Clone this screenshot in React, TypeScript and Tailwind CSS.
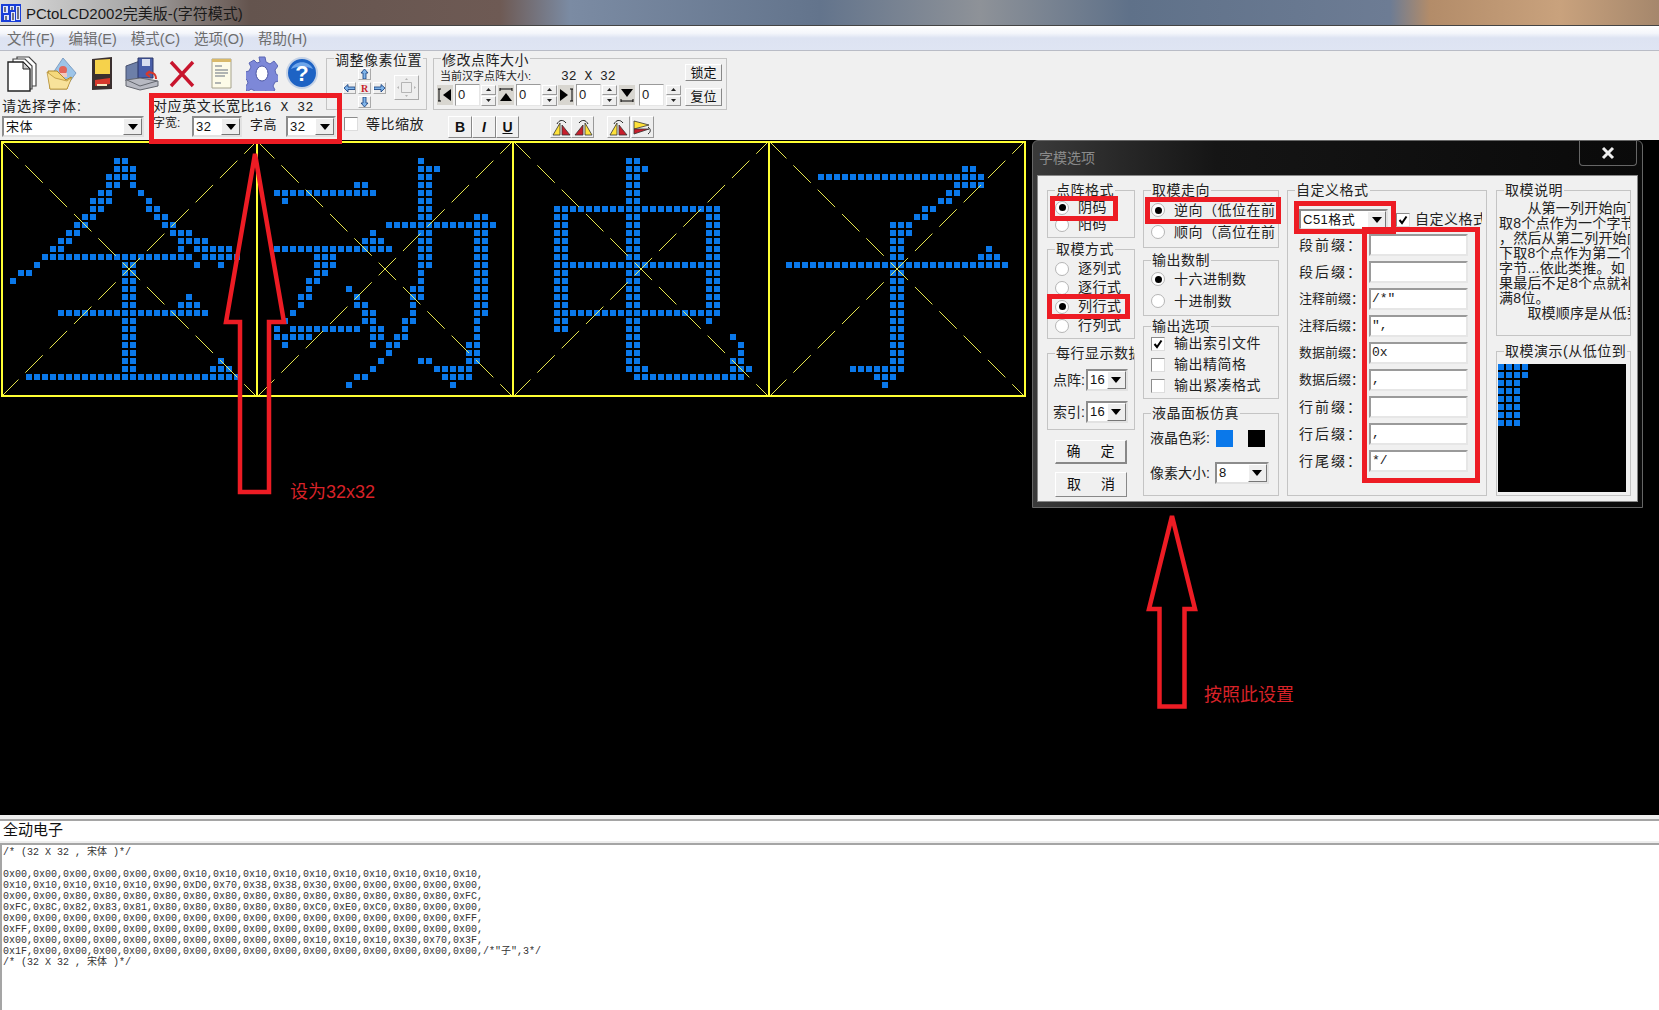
import React from 'react';

// dot rows for each glyph: row -> "col col-col ..."
const col1516 = '15-16';
const glyphs: Record<number, string>[] = [
  {
    2: '14-15', 3: '14-16', 4: '13-16', 5: '13-14 16', 6: '12-13 17', 7: '11-13 18', 8: '11-12 18-19', 9: '10-11 19-20',
    10: '9-10 20-21', 11: '8-9 21-23', 12: '7-8 22-25', 13: '6-7 22 24-28', 14: '5-23 25-29', 15: '4 15-16 24 27',
    16: '2-3 15-16', 17: '1 15-16', 18: col1516, 19: '15-16 23', 20: '15-16 22-24', 21: '7-25', 22: col1516, 23: col1516,
    24: col1516, 25: col1516, 26: col1516, 27: '15-16 27', 28: '15-16 26-28', 29: '3-29',
  },
  {
    2: '20', 3: '20-22', 4: '20-21', 5: '12-13 20-21', 6: '2-14 20-21', 7: '3 20-21', 8: '20-21', 9: '20-21 27-28',
    10: '16-29', 11: '14 20-21 27-28', 12: '13-15 20-21 27-28', 13: '2-16 20-21 27-28', 14: '7-9 20-21 27-28',
    15: '7-9 20-21 27-28', 16: '7-8 20 27-28', 17: '6-7 20 27-28', 18: '6 11 19-20 27-28', 19: '5-6 12 19-20 27-28',
    20: '5 12-13 19 27-28', 21: '4 13-14 19 27-28', 22: '3 13-14 18-19 27', 23: '2 4-12 14-15 18 27', 24: '2-6 14-15 17-18 27',
    25: '3 14 16-17 26-27', 26: '16 26-27', 27: '15 20-21 26-27', 28: '14 22-26', 29: '12-13 23-26', 30: '11 24',
  },
  {
    2: '14-15', 3: '14-16', 4: '14-15', 5: '14-15', 6: '14-15', 7: '14-15', 8: '5-25', 9: '5-6 14-15 24-25', 10: '5-6 14-15 24-25',
    11: '5-6 14-15 24-25', 12: '5-6 14-15 24-25', 13: '5-6 14-15 24-25', 14: '5-6 14-15 24-25', 15: '5-25', 16: '5-6 14-15 24-25',
    17: '5-6 14-15 24-25', 18: '5-6 14-15 24-25', 19: '5-6 14-15 24-25', 20: '5-6 14-15 24-25', 21: '5-25', 22: '5-6 14-15 24',
    23: '5-6 14-15', 24: '14-15 27', 25: '14-15 28', 26: '14-15 28', 27: '14-15 27-28', 28: '14-16 27-29', 29: '15-28',
  },
  {
    3: '24-25', 4: '6-26', 5: '23-26', 6: '22-23', 7: '21-22', 8: '19-20', 9: '18-19', 10: '15-17', 11: '15-17', 12: col1516,
    13: '15-16 27', 14: '15-16 26-28', 15: '2-29', 16: col1516, 17: col1516, 18: col1516, 19: col1516, 20: col1516, 21: col1516,
    22: col1516, 23: col1516, 24: col1516, 25: col1516, 26: col1516, 27: col1516, 28: '10-16', 29: '13-15', 30: '14',
  },
];

const dots = (glyph: Record<number, string>) =>
  Object.entries(glyph).flatMap(([row, spec]) =>
    spec.split(' ').flatMap(part => {
      const [a, b] = part.split('-').map(Number);
      const out: [number, number][] = [];
      for (let c = a; c <= (b ?? a); c++) out.push([c, Number(row)]);
      return out;
    }),
  );

const hexLines = [
  '0x00, 0x00, 0x00, 0x00, 0x00, 0x00, 0x10, 0x10, 0x10, 0x10, 0x10, 0x10, 0x10, 0x10, 0x10, 0x10,',
  '0x10, 0x10, 0x10, 0x10, 0x10, 0x90, 0xD0, 0x70, 0x38, 0x38, 0x30, 0x00, 0x00, 0x00, 0x00, 0x00,',
  '0x00, 0x00, 0x80, 0x80, 0x80, 0x80, 0x80, 0x80, 0x80, 0x80, 0x80, 0x80, 0x80, 0x80, 0x80, 0xFC,',
  '0xFC, 0x8C, 0x82, 0x83, 0x81, 0x80, 0x80, 0x80, 0x80, 0x80, 0xC0, 0xE0, 0xC0, 0x80, 0x00, 0x00,',
  '0x00, 0x00, 0x00, 0x00, 0x00, 0x00, 0x00, 0x00, 0x00, 0x00, 0x00, 0x00, 0x00, 0x00, 0x00, 0xFF,',
  '0xFF, 0x00, 0x00, 0x00, 0x00, 0x00, 0x00, 0x00, 0x00, 0x00, 0x00, 0x00, 0x00, 0x00, 0x00, 0x00,',
  '0x00, 0x00, 0x00, 0x00, 0x00, 0x00, 0x00, 0x00, 0x00, 0x00, 0x10, 0x10, 0x10, 0x30, 0x70, 0x3F,',
  '0x1F, 0x00, 0x00, 0x00, 0x00, 0x00, 0x00, 0x00, 0x00, 0x00, 0x00, 0x00, 0x00, 0x00, 0x00, 0x00, /*"子",3*/',
];

const Triangle = () => (
  <svg width="10" height="6" viewBox="0 0 10 6"><path d="M0 0h10L5 6z" fill="#000" /></svg>
);

const Combo: React.FC<{ value: string; className: string }> = ({ value, className }) => (
  <div className={`flex items-stretch bg-white border-2 border-t-[#8c8c8c] border-l-[#8c8c8c] border-r-[#e2e2e2] border-b-[#e2e2e2] ${className}`}>
    <span className="flex-1 overflow-hidden whitespace-nowrap pl-[2px] text-[13px] leading-[17px] tracking-[0.5px] text-[#111]">{value}</span>
    <span className="flex w-[19px] items-center justify-center border border-t-white border-l-white border-r-[#777] border-b-[#777] bg-[#eeeeee]">
      <Triangle />
    </span>
  </div>
);

const Radio: React.FC<{ on?: boolean }> = ({ on }) => (
  <span className="flex h-[14px] w-[14px] shrink-0 items-center justify-center rounded-full border border-[#b5b5b5] bg-white">
    {on && <span className="h-[7px] w-[7px] rounded-full bg-black" />}
  </span>
);

const Check: React.FC<{ on?: boolean }> = ({ on }) => (
  <span className="flex h-[14px] w-[14px] shrink-0 items-center justify-center border border-t-[#8c8c8c] border-l-[#8c8c8c] border-r-[#dddddd] border-b-[#dddddd] bg-white">
    {on && (
      <svg width="10" height="10" viewBox="0 0 10 10"><path d="M1.5 5l2.5 3 4.5-6.5" fill="none" stroke="#000" strokeWidth="2" /></svg>
    )}
  </span>
);

const Group: React.FC<{ title: string; className: string; low?: boolean; children?: React.ReactNode }> = ({ title, className, low, children }) => (
  <div className={`relative shrink-0 border border-[#c4c4c4] ${className}`}>
    <span className={`absolute left-[7px] max-w-[calc(100%-7px)] overflow-hidden whitespace-nowrap bg-[#f0f0f0] px-px text-[14px] leading-[16px] tracking-[0.5px] text-[#222] ${low ? 'top-[-7px]' : 'top-[-9px]'}`}>
      {title}
    </span>
    {children}
  </div>
);

const Row: React.FC<{ label: string; on?: boolean; className?: string }> = ({ label, on, className }) => (
  <div className={`flex items-center gap-[9px] whitespace-nowrap text-[14px] leading-[19px] tracking-[0.5px] text-[#222] ${className ?? ''}`}>
    <Radio on={on} />
    {label}
  </div>
);

const CheckRow: React.FC<{ label: string; on?: boolean }> = ({ label, on }) => (
  <div className="flex h-[21px] items-center gap-[9px] overflow-hidden whitespace-nowrap text-[14px] tracking-[0.5px] text-[#222]">
    <Check on={on} />
    {label}
  </div>
);

const Raised: React.FC<{ className: string; children?: React.ReactNode }> = ({ className, children }) => (
  <div className={`flex items-center justify-center border border-t-white border-l-white border-r-[#888] border-b-[#888] bg-[#f0f0f0] text-[#111] ${className}`}>
    {children}
  </div>
);

const Spin: React.FC<{ icon: React.ReactNode; inputMl: string; spinMl: string; ml: string }> = ({ icon, inputMl, spinMl, ml }) => (
  <div className={`flex items-center ${ml}`}>
    <span className="flex h-[20px] w-[16px] items-center justify-center bg-[#d8d6d0]">{icon}</span>
    <span className={`h-[22px] w-[25px] border border-t-[#9a9a9a] border-l-[#9a9a9a] border-r-[#e6e6e6] border-b-[#e6e6e6] bg-white pl-[2px] text-[13px] leading-[20px] text-[#222] ${inputMl}`}>0</span>
    <span className={`flex w-[15px] flex-col gap-px ${spinMl}`}>
      <span className="flex h-[10px] items-center justify-center border border-t-white border-l-white border-r-[#999] border-b-[#999] bg-[#eeeeee] text-[0px]">
        <svg width="5" height="3" viewBox="0 0 5 3"><path d="M0 3h5L2.5 0z" fill="#222" /></svg>
      </span>
      <span className="flex h-[10px] items-center justify-center border border-t-white border-l-white border-r-[#999] border-b-[#999] bg-[#eeeeee] text-[0px]">
        <svg width="5" height="3" viewBox="0 0 5 3"><path d="M0 0h5L2.5 3z" fill="#222" /></svg>
      </span>
    </span>
  </div>
);

const Arrow: React.FC<{ d: string }> = ({ d }) => (
  <span className="flex h-[12px] w-[13px] items-center justify-center border border-t-white border-l-white border-r-[#aaa] border-b-[#aaa] bg-[#eeeeee]">
    <svg width="11" height="10" viewBox="0 0 11 10"><path d={d} fill="#7fb4ea" stroke="#123a78" strokeWidth="0.8" /></svg>
  </span>
);

const RotateIcon: React.FC<{ flip?: boolean; variant?: boolean; className: string }> = ({ flip, variant, className }) => (
  <span className={`flex h-[22px] w-[23px] items-center justify-center border border-t-white border-l-white border-r-[#999] border-b-[#999] bg-[#eeeeee] ${className}`}>
    <svg width="20" height="18" viewBox="0 0 20 18" className={flip ? '-scale-x-100' : ''}>
      {variant ? (
        <>
          <path d="M1 3l15 4-15 4z" fill="#ffe23a" stroke="#333" strokeWidth="0.8" />
          <path d="M1 11l15 0-15 5z" fill="#c81e2b" stroke="#333" strokeWidth="0.8" />
          <path d="M15 9c3 2 3 5 0 7" fill="none" stroke="#222" />
        </>
      ) : (
        <>
          <path d="M1 17L8 5v12z" fill="#ffe23a" stroke="#333" strokeWidth="0.8" />
          <path d="M10 7l8 10h-8z" fill="#c81e2b" stroke="#333" strokeWidth="0.8" />
          <path d="M5 6c2-4 6-5 9-1" fill="none" stroke="#222" />
        </>
      )}
    </svg>
  </span>
);

const ToolbarIcons = () => (
  <div className="flex h-[45px] items-start pt-[5px]">
    <svg width="30" height="36" viewBox="0 0 30 36" className="ml-[7px]">
      <path d="M10 1h12l7 7v22H10z" fill="#fff" stroke="#444" strokeWidth="1.2" />
      <path d="M6 3h12l7 7v23H6z" fill="#fff" stroke="#444" strokeWidth="1.2" />
      <path d="M1 6h15l7 7v22H1z" fill="#fff" stroke="#222" strokeWidth="1.4" />
      <path d="M16 6v7h7z" fill="#ccc" stroke="#222" />
    </svg>
    <svg width="32" height="34" viewBox="0 0 32 34" className="ml-[9px]">
      <path d="M5 20L17 2l13 15-10 14z" fill="#9cc4e8" stroke="#7e9fc4" />
      <circle cx="17" cy="14" r="4" fill="#e2665a" />
      <path d="M13 17h8v4h-8z" fill="#f3c9bd" />
      <path d="M2 15h9l9 9 5-3-4 12H4z" fill="#f5d97c" stroke="#b08a2e" />
      <path d="M4 33L1 16l8 6 12 3 5-4-5 12z" fill="#f8e29a" stroke="#b08a2e" strokeWidth="0.7" />
    </svg>
    <svg width="24" height="35" viewBox="0 0 24 35" className="ml-[12px]">
      <path d="M2 3l20-2v32l-20 1z" fill="#3a2f2f" />
      <path d="M5 4l15-1v15H5z" fill="#f6d24b" />
      <path d="M5 24l15-2v6l-15 2z" fill="#d8382b" />
      <path d="M7 28h10v2H7z" fill="#f6e7c0" />
    </svg>
    <svg width="34" height="35" viewBox="0 0 34 35" className="ml-[11px]">
      <path d="M1 10l14-5v18l-14 2z" fill="#6d7fa8" stroke="#46506e" />
      <path d="M13 2h15v20H13z" fill="#4a5fa8" stroke="#2b3768" />
      <path d="M17 3h8v7h-8z" fill="#d9deef" />
      <path d="M1 24l14-2 18 3v5l-18 4-14-4z" fill="#b7b9c2" stroke="#63666e" />
      <path d="M2 24l13 6 17-5" fill="none" stroke="#63666e" />
      <path d="M21 18c5-3 10-1 10 5M21 18l4-3M21 18l4 3" fill="none" stroke="#d8382b" strokeWidth="2" />
    </svg>
    <svg width="26" height="28" viewBox="0 0 26 28" className="ml-[10px] mt-[4px]">
      <path d="M2 2l22 24M24 2L2 26" stroke="#c8152d" strokeWidth="3.4" />
    </svg>
    <svg width="21" height="31" viewBox="0 0 21 31" className="ml-[16px] mt-[2px]">
      <path d="M1 1h19v29H1z" fill="#fdfbe8" stroke="#a5a28c" />
      <path d="M1 1h19v3H1z" fill="#d9b96a" />
      <path d="M4 8h7M4 12h13M4 15h13M4 18h10M4 25h6" stroke="#66707e" strokeWidth="1.2" />
    </svg>
    <svg width="32" height="35" viewBox="0 0 32 35" className="ml-[14px]">
      <path
        d="M13 1h6l1 5 4 2 4-3 4 5-3 4 1 4 3 2v5l-4 1-2 4 2 4-5 4-4-3-3 1-2 4h-5l-1-5-4-2-4 3-2-5 3-4-1-3-2-2v-6l4-1 2-4-2-4 5-3 3 3 3-1z"
        fill="#7d88d8"
        stroke="#5b66b4"
      />
      <ellipse cx="16" cy="17.5" rx="6" ry="7.5" fill="#fff" stroke="#4e58a4" />
    </svg>
    <svg width="32" height="34" viewBox="0 0 32 34" className="ml-[8px]">
      <circle cx="16" cy="17" r="15" fill="#1e63c4" stroke="#c6d3e6" strokeWidth="2" />
      <path d="M5 13c4-9 18-9 22 0-7-3-15-3-22 0z" fill="#6fa6ea" />
      <text x="16" y="25" textAnchor="middle" fontSize="22" fontWeight="700" fill="#fff" fontFamily="Liberation Sans">?</text>
    </svg>
  </div>
);

const CharGrid = () => (
  <svg width="1028" height="258" viewBox="0 0 1028 258" className="block">
    {glyphs.map((g, i) =>
      dots(g).map(([c, r]) => <rect key={`${i}-${c}-${r}`} x={2 + 256 * i + 8 * c} y={2 + 8 * r} width="6" height="6" fill="#0a78ea" />),
    )}
    {[0, 1, 2, 3].map(i => (
      <g key={i} stroke="#ffff55" strokeWidth="0.9" strokeDasharray="24.7 9.7">
        <line x1={1 + 256 * i} y1="1" x2={257 + 256 * i} y2="257" />
        <line x1={1 + 256 * i} y1="257" x2={257 + 256 * i} y2="1" />
      </g>
    ))}
    {[1, 256, 512, 768, 1024].map(x => (
      <rect key={x} x={x} y="1" width="2" height="256" fill="#ffff33" />
    ))}
    <rect x="1" y="1" width="1025" height="2" fill="#ffff33" />
    <rect x="1" y="255" width="1025" height="2" fill="#ffff33" />
  </svg>
);

const labelRows = [
  ['段前缀：', ''],
  ['段后缀：', ''],
  ['注释前缀：', '/*"'],
  ['注释后缀：', '",'],
  ['数据前缀：', '0x'],
  ['数据后缀：', ','],
  ['行前缀：', ''],
  ['行后缀：', ','],
  ['行尾缀：', '*/'],
];

const noteLines = [
  '\u3000\u3000从第一列开始向下',
  '取8个点作为一个字节',
  '，然后从第二列开始向',
  '下取8个点作为第二个',
  '字节...依此类推。如',
  '果最后不足8个点就补',
  '满8位。',
  '\u3000\u3000取模顺序是从低到',
];

const OptionsDialog = () => (
  <div className="absolute left-[1032px] top-[140px] h-[368px] w-[611px] rounded-t-[6px] border border-[#666] bg-[linear-gradient(90deg,#3a3a3a_0%,#151515_30%,#0a0a0a_100%)] px-[4px]">
    <div className="relative flex h-[34px] items-center pl-[2px] text-[14px] text-[#8a8a8a]">
      字模选项
      <span className="absolute right-[1px] top-0 flex h-[25px] w-[58px] items-center justify-center rounded-b-[4px] border border-t-0 border-[#666]">
        <svg width="14" height="14" viewBox="0 0 14 14"><path d="M2 2l10 10M12 2L2 12" stroke="#eee" strokeWidth="3" /></svg>
      </span>
    </div>
    <div className="flex h-[327px] border border-[#888] bg-[#f0f0f0] pl-[9px] pt-[14px]">
      <div className="flex w-[88px] shrink-0 flex-col">
        <Group title="点阵格式" className="h-[48px] pl-[7px] pt-[7px]">
          <Row label="阴码" on />
          <Row label="阳码" className="mt-[-2px]" />
        </Group>
        <Group title="取模方式" className="mt-[11px] h-[90px] pl-[7px] pt-[9px]">
          <Row label="逐列式" />
          <Row label="逐行式" />
          <Row label="列行式" on />
          <Row label="行列式" />
        </Group>
        <Group title="每行显示数据" className="mt-[14px] h-[77px] pt-[15px]">
          <div className="flex items-center gap-px pl-[5px] text-[14px] text-[#222]">
            点阵:<Combo value="16" className="h-[22px] w-[42px]" />
          </div>
          <div className="mt-[10px] flex items-center gap-px pl-[5px] text-[14px] text-[#222]">
            索引:<Combo value="16" className="h-[22px] w-[42px]" />
          </div>
        </Group>
        <Raised className="ml-[8px] mt-[10px] h-[24px] w-[72px] gap-[20px] border-b-2 border-r-2 text-[14px]"><span>确</span><span>定</span></Raised>
        <Raised className="ml-[8px] mt-[8px] h-[25px] w-[72px] gap-[20px] text-[14px]"><span>取</span><span>消</span></Raised>
      </div>

      <div className="ml-[8px] flex w-[136px] shrink-0 flex-col">
        <Group title="取模走向" className="h-[58px] pl-[7px] pt-[8px]">
          <Row label="逆向（低位在前" on className="h-[22px] w-[127px] overflow-hidden" />
          <Row label="顺向（高位在前" className="h-[22px] w-[127px] overflow-hidden" />
        </Group>
        <Group title="输出数制" className="mt-[12px] h-[56px] pl-[7px] pt-[7px]">
          <Row label="十六进制数" on className="h-[22px]" />
          <Row label="十进制数" className="h-[22px]" />
        </Group>
        <Group title="输出选项" className="mt-[10px] h-[73px] pl-[7px] pt-[6px]">
          <div className="w-[126px]">
            <CheckRow label="输出索引文件" on />
            <CheckRow label="输出精简格" />
            <CheckRow label="输出紧凑格式" />
          </div>
        </Group>
        <Group title="液晶面板仿真" className="mt-[14px] h-[83px] pl-[6px] pt-[14px] text-[14px] text-[#222]">
          <div className="flex items-center whitespace-nowrap">
            液晶色彩:
            <span className="ml-[6px] h-[17px] w-[17px] bg-[#0a78ea]" />
            <span className="ml-[15px] h-[17px] w-[17px] bg-black" />
          </div>
          <div className="mt-[13px] flex items-center whitespace-nowrap">
            像素大小:
            <Combo value="8" className="ml-[5px] h-[22px] w-[54px]" />
          </div>
        </Group>
      </div>

      <Group title="自定义格式" className="ml-[8px] h-[306px] w-[200px] pl-[11px] pt-[18px]">
        <div className="flex items-center">
          <Combo value="C51格式" className="h-[21px] w-[89px]" />
          <span className="ml-[8px]"><Check on /></span>
          <span className="ml-[5px] w-[67px] overflow-hidden whitespace-nowrap text-[14px] tracking-[0.5px] text-[#222]">自定义格式</span>
        </div>
        <div className="mt-[4px] flex flex-col gap-[5px]">
          {labelRows.map(([label, value]) => (
            <div key={label} className="flex items-center">
              <span className={`w-[70px] shrink-0 whitespace-nowrap text-[#222] ${label.length === 4 ? 'text-[14px] tracking-[2px]' : 'text-[13px]'}`}>{label}</span>
              <span className="h-[22px] w-[99px] border-2 border-t-[#9a9a9a] border-l-[#9a9a9a] border-r-[#e6e6e6] border-b-[#e6e6e6] bg-white pl-[1px] font-['Liberation_Mono',monospace] text-[13px] leading-[18px] text-[#222]">{value}</span>
            </div>
          ))}
        </div>
      </Group>

      <div className="ml-[9px] flex w-[135px] shrink-0 flex-col">
        <Group title="取模说明" className="h-[146px] pl-[2px] pt-[10px]">
          <div className="w-[131px] overflow-hidden text-[14px] leading-[15px] tracking-[0.2px] text-[#222]">
            {noteLines.map(line => (
              <div key={line} className="whitespace-nowrap">{line}</div>
            ))}
          </div>
        </Group>
        <Group title="取模演示(从低位到" className="mt-[15px] h-[145px] pl-[1px] pt-[12px]">
          <div className="flex h-[128px] w-[128px] flex-col gap-[2px] bg-black">
            {[4, 4, 3, 3, 3, 3, 3, 3].map((n, y) => (
              <div key={y} className="flex h-[6px] gap-[2px]">
                {Array.from({ length: n }).map((_, x) => (
                  <span key={x} className="h-[6px] w-[6px] bg-[#0a78ea]" />
                ))}
              </div>
            ))}
          </div>
        </Group>
      </div>
    </div>
  </div>
);

const App: React.FC = () => (
  <div className="relative flex h-[1010px] w-[1659px] flex-col overflow-hidden bg-[#f0f0f0] font-['Liberation_Sans','Noto_Sans_CJK_SC',sans-serif]">
    {/* title bar */}
    <div className="flex h-[25px] shrink-0 items-center bg-[linear-gradient(90deg,#dddddd_0px,#a8a8a8_130px,#64544e_250px,#6e5a54_500px,#7b8ba3_570px,#63748c_820px,#8e9298_980px,#5f7189_1130px,#6d7c94_1390px,#b38c69_1430px,#c9a27d_1560px,#a5876c_1659px)] pl-px">
      <svg width="20" height="22" viewBox="0 0 20 22">
        <rect x="0" y="2" width="20" height="18" fill="#1a3fd8" />
        <path d="M2 4h5v7H2zM9 4h4v4H9zM15 4h4v14h-4zM3 13h5v5H3zM10 10h4v9h-4z" fill="#dfe7ff" />
        <path d="M4 5v5M11 5v3M17 5v12M5 14v4M12 11v7" stroke="#000" />
      </svg>
      <span className="ml-[5px] whitespace-nowrap pt-[3px] text-[15px] text-[#1a1a1a]">PCtoLCD2002完美版-(字符模式)</span>
    </div>

    {/* menu */}
    <div className="flex h-[26px] shrink-0 items-center gap-[14px] border-t border-b border-t-[#444] border-b-[#b9bcc6] bg-[linear-gradient(180deg,#ffffff_0%,#f4f6fb_30%,#dde3f2_50%,#dfe5f3_100%)] pl-[7px] pt-[3px] text-[14.5px] text-[#6e6e6e]">
      <span>文件(F)</span>
      <span>编辑(E)</span>
      <span>模式(C)</span>
      <span>选项(O)</span>
      <span>帮助(H)</span>
    </div>

    {/* toolbar */}
    <div className="h-[89px] shrink-0 text-[#222]">
      <div className="flex h-[63px]">
        <div className="w-[326px] shrink-0">
          <ToolbarIcons />
          <div className="flex items-center">
            <span className="ml-[2px] w-[151px] text-[14px] tracking-[1px]">请选择字体:</span>
            <span className="whitespace-nowrap text-[14px] tracking-[0.6px]">对应英文长宽比<span className="font-['Liberation_Mono',monospace] text-[13px]">16 X 32</span></span>
          </div>
        </div>
        <Group title="调整像素位置" low className="mt-[7px] h-[52px] w-[101px]">
          <div className="flex pl-[16px] pt-[9px]">
            <div className="grid grid-cols-[15px_15px_15px] grid-rows-[14px_14px_14px]">
              <span />
              <Arrow d="M5.5 0L9 4H7v6H4V4H2z" />
              <span />
              <Arrow d="M0 5l4-3.5V4h7v2.5H4V9z" />
              <span className="flex h-[12px] w-[13px] items-center justify-center border border-t-white border-l-white border-r-[#aaa] border-b-[#aaa] bg-[#eeeeee] font-['Liberation_Serif',serif] text-[10px] font-bold text-[#c81e2b]">R</span>
              <Arrow d="M11 5L7 1.5V4H0v2.5h7V9z" />
              <span />
              <Arrow d="M5.5 10L9 6H7V0H4v6H2z" />
              <span />
            </div>
            <span className="ml-[6px] mt-[7px] flex h-[25px] w-[25px] items-center justify-center border border-t-white border-l-white border-r-[#aaa] border-b-[#aaa] bg-[#eeeeee]">
              <svg width="21" height="21" viewBox="0 0 21 21">
                <path d="M5.500 5.500h10v10h-10z" fill="none" stroke="#b5b5b5" />
                <path d="M10.500 1l1.500 2h-3zM10.500 20l1.500-2h-3zM1 10.500l2-1.500v3zM20 10.500l-2-1.500v3z" fill="#b5b5b5" />
              </svg>
            </span>
          </div>
        </Group>
        <Group title="修改点阵大小" low className="ml-[6px] mt-[7px] flex h-[52px] w-[294px]">
          <div className="w-[249px] shrink-0">
            <div className="flex h-[24px] items-end pl-[6px]">
              <span className="w-[121px] whitespace-nowrap text-[11px] leading-[14px]">当前汉字点阵大小:</span>
              <span className="whitespace-nowrap font-['Liberation_Mono',monospace] text-[13px] leading-[13px]">32 X 32</span>
            </div>
            <div className="mt-[1px] flex pl-[3px]">
              <Spin ml="" inputMl="ml-[2px]" spinMl="ml-px" icon={<svg width="14" height="14" viewBox="0 0 14 14"><path d="M1 1v12M0 1h3M0 13h3" stroke="#000" /><path d="M13 1v12L5 7z" fill="#000" /></svg>} />
              <Spin ml="ml-[2px]" inputMl="ml-[2px]" spinMl="ml-px" icon={<svg width="14" height="14" viewBox="0 0 14 14"><path d="M1 1h12M1 0v3M13 0v3" stroke="#000" /><path d="M1 13h12L7 5z" fill="#000" /></svg>} />
              <Spin ml="ml-px" inputMl="ml-[2px]" spinMl="ml-px" icon={<svg width="14" height="14" viewBox="0 0 14 14"><path d="M13 1v12M11 1h3M11 13h3" stroke="#000" /><path d="M1 1v12l8-6z" fill="#000" /></svg>} />
              <Spin ml="ml-[2px]" inputMl="ml-[4px]" spinMl="ml-[2px]" icon={<svg width="14" height="14" viewBox="0 0 14 14"><path d="M1 13h12M1 11v3M13 11v3" stroke="#000" /><path d="M1 1h12L7 9z" fill="#000" /></svg>} />
            </div>
          </div>
          <div className="ml-[2px] flex flex-col pt-[5px]">
            <Raised className="h-[17px] w-[37px] text-[13px]">锁定</Raised>
            <Raised className="mt-[7px] h-[18px] w-[37px] text-[13px]">复位</Raised>
          </div>
        </Group>
      </div>

      <div className="flex h-[26px] items-start pt-[2px]">
        <Combo value="宋体" className="ml-[2px] h-[21px] w-[142px]" />
        <span className="ml-[9px] mt-[-1px] w-[39px] text-[12px] leading-[16px]">字宽:</span>
        <Combo value="32" className="h-[21px] w-[50px]" />
        <span className="ml-[8px] w-[36px] text-[13px] leading-[17px] tracking-[0.5px]">字高</span>
        <Combo value="32" className="h-[21px] w-[50px]" />
        <span className="ml-[8px] mt-px h-[14px] w-[14px] border border-t-[#8c8c8c] border-l-[#8c8c8c] border-r-[#ddd] border-b-[#ddd] bg-white" />
        <span className="ml-[8px] text-[14px] leading-[17px] tracking-[0.5px]">等比缩放</span>
        <div className="ml-[24px] flex">
          <Raised className="h-[22px] w-[24px] text-[14px] font-bold">B</Raised>
          <Raised className="h-[22px] w-[24px] text-[14px] font-bold italic">I</Raised>
          <Raised className="h-[22px] w-[23px] text-[14px] font-bold underline">U</Raised>
        </div>
        <RotateIcon className="ml-[31px]" />
        <RotateIcon className="ml-[-2px]" flip />
        <RotateIcon className="ml-[13px]" />
        <RotateIcon className="ml-px" variant />
      </div>
    </div>

    {/* dot matrix canvas */}
    <div className="h-[675px] shrink-0 bg-black">
      <CharGrid />
    </div>

    <div className="h-[4px] shrink-0 bg-[#eeeeee]" />
    <div className="h-[22px] shrink-0 border-t-2 border-t-[#a5a5a5] bg-white pl-[3px] text-[15px] leading-[17px] text-[#111]">全动电子</div>
    <div className="h-[2px] shrink-0 bg-[#eeeeee]" />
    <div className="flex-1 border-t-2 border-l-2 border-[#a5a5a5] bg-white pl-px pt-[2px] font-['Liberation_Mono','Noto_Sans_CJK_SC',monospace] text-[10px] leading-[11px] text-[#333]">
      <div className="whitespace-pre">{'/* (32 X 32 , 宋体 )*/'}</div>
      <div className="h-[11px]" />
      {hexLines.map(line => (
        <div key={line} className="whitespace-pre [word-spacing:-6px]">{line}</div>
      ))}
      <div className="whitespace-pre">{'/* (32 X 32 , 宋体 )*/'}</div>
    </div>

    <OptionsDialog />

    {/* red annotations */}
    <div className="absolute left-[149px] top-[93px] h-[51px] w-[193px] border-[5px] border-[#ed1c24]" />
    <div className="absolute left-[1050px] top-[196px] h-[25px] w-[68px] border-[5px] border-[#ed1c24]" />
    <div className="absolute left-[1145px] top-[197px] h-[27px] w-[136px] border-[5px] border-[#ed1c24]" />
    <div className="absolute left-[1047px] top-[294px] h-[25px] w-[83px] border-[5px] border-[#ed1c24]" />
    <div className="absolute left-[1294px] top-[201px] h-[33px] w-[102px] border-[5px] border-[#ed1c24]" />
    <div className="absolute left-[1362px] top-[227px] h-[256px] w-[118px] border-[5px] border-[#ed1c24]" />
    <svg width="1659" height="1010" viewBox="0 0 1659 1010" className="pointer-events-none absolute left-0 top-0">
      <path d="M255 154L226 322H240V492H269V322H284Z" fill="none" stroke="#ed1c24" strokeWidth="4.5" />
      <path d="M1172 516L1149 609H1159.5V706.500H1184.5V609H1195Z" fill="none" stroke="#ed1c24" strokeWidth="4.5" />
    </svg>
    <span className="absolute left-[290px] top-[479px] whitespace-nowrap text-[18px] leading-[26px] text-[#d82228]">设为32x32</span>
    <span className="absolute left-[1204px] top-[682px] whitespace-nowrap text-[18px] leading-[26px] text-[#d82228]">按照此设置</span>
  </div>
);

export default App;
